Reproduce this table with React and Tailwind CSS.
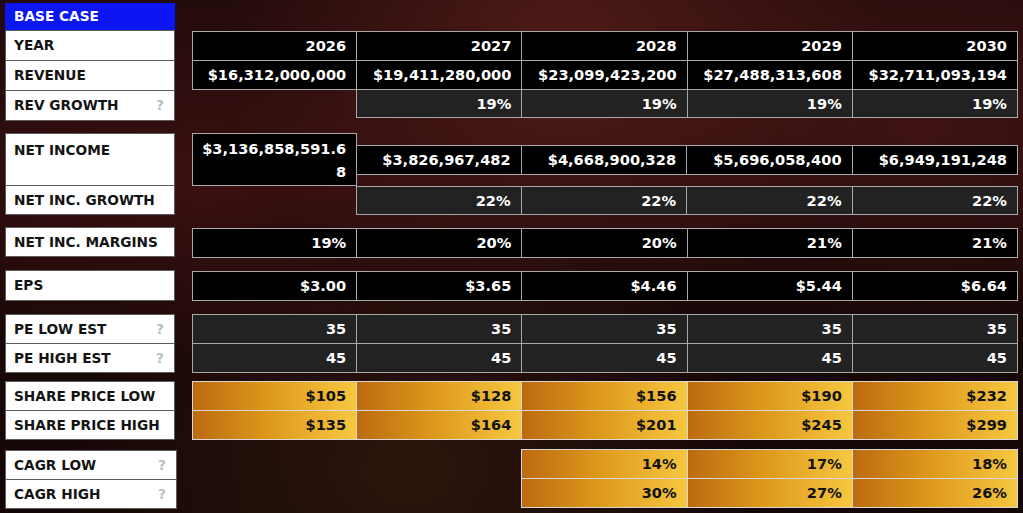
import React from 'react'

const years = ['2026', '2027', '2028', '2029', '2030']
const revenue = ['$16,312,000,000', '$19,411,280,000', '$23,099,423,200', '$27,488,313,608', '$32,711,093,194']
const revGrowth = ['19%', '19%', '19%', '19%']
const netIncome = ['$3,826,967,482', '$4,668,900,328', '$5,696,058,400', '$6,949,191,248']
const netGrowth = ['22%', '22%', '22%', '22%']
const margins = ['19%', '20%', '20%', '21%', '21%']
const eps = ['$3.00', '$3.65', '$4.46', '$5.44', '$6.64']
const peLow = ['35', '35', '35', '35', '35']
const peHigh = ['45', '45', '45', '45', '45']
const priceLow = ['$105', '$128', '$156', '$190', '$232']
const priceHigh = ['$135', '$164', '$201', '$245', '$299']
const cagrLow = ['14%', '17%', '18%']
const cagrHigh = ['30%', '27%', '26%']

const tones = {
  black: 'bg-black text-white border-[#a8a8a8]',
  gray: 'bg-[#222222] text-white border-[#a8a8a8]',
  gold: 'bg-linear-to-r from-[#bc6a10] via-[#e09c1c] to-[#f6c73f] text-[#111] border-[#d8d8d8]',
}

// one bordered value cell; -ml-px lets it overlap the neighbour's border
const Cell = ({ value, tone = 'black', first = false }) => (
  <div
    className={`${first ? '' : '-ml-px'} border flex items-center justify-end pr-[10px] ${tones[tone]}`}
  >
    {value}
  </div>
)

const DataRow = ({ values, tone, lead = 0, cols = 'grid-cols-5', h = 'h-[30px]', className = '' }) => (
  <div className={`grid ${cols} ${h} ${className}`}>
    {Array.from({ length: lead }).map((_, i) => (
      <div key={'g' + i} />
    ))}
    {values.map((v, i) => (
      <Cell key={i} value={v} tone={tone} first={i === 0 && lead === 0} />
    ))}
  </div>
)

const Label = ({ text, help, h = 'h-[30px]', top = false, first = false }) => (
  <div
    className={`${h} ${first ? '' : '-mt-px'} bg-white border border-[#5c5c5c] flex justify-between pl-[8px] pr-[10px] text-[#141414] ${
      top ? 'items-start pt-[6px]' : 'items-center'
    }`}
  >
    <span>{text}</span>
    {help && <span className="text-[#bdbdbd]">?</span>}
  </div>
)

export default function App() {
  return (
    <div className="w-[1023px] h-[513px] overflow-hidden bg-[#1a0808] bg-[radial-gradient(ellipse_at_55%_10%,#4f1b18_0%,transparent_42%),radial-gradient(ellipse_at_20%_35%,#3c1011_0%,transparent_38%),radial-gradient(ellipse_at_90%_25%,#401313_0%,transparent_35%),radial-gradient(ellipse_at_40%_92%,#2c150c_0%,transparent_40%),linear-gradient(180deg,#240b0b_0%,#140606_100%)] font-['DejaVu_Sans',sans-serif] font-bold text-[13.7px] pt-[3px] pl-[5px]">
      <div className="w-[170px] h-[27px] bg-[#0b16f2] text-white flex items-center pl-[9px]">BASE CASE</div>

      {/* year / revenue */}
      <div className="flex">
        <div className="w-[170px] flex flex-col">
          <Label text="YEAR" h="h-[31px]" first />
          <Label text="REVENUE" h="h-[31px]" />
          <Label text="REV GROWTH" help h="h-[31px]" />
        </div>
        <div className="ml-[17px] w-[826px] pt-px flex flex-col text-[14.6px]">
          <DataRow values={years} tone="black" />
          <DataRow values={revenue} tone="black" className="-mt-px" />
          <DataRow values={revGrowth} tone="gray" lead={1} h="h-[29px]" className="-mt-px" />
        </div>
      </div>

      {/* net income */}
      <div className="flex mt-[12px]">
        <div className="w-[170px] flex flex-col">
          <Label text="NET INCOME" h="h-[53px]" top first />
          <Label text="NET INC. GROWTH" />
        </div>
        <div className="ml-[17px] w-[826px] grid grid-cols-5 items-start text-[14.6px]">
          <div className="h-[53px] bg-black text-white border border-[#a8a8a8] flex flex-col items-end justify-center pr-[10px] leading-[23px]">
            <span>$3,136,858,591.6</span>
            <span>8</span>
          </div>
          <div className="col-span-4 -ml-px flex flex-col">
            <DataRow values={netIncome} tone="black" cols="grid-cols-4" className="mt-[12px]" />
            <DataRow values={netGrowth} tone="gray" cols="grid-cols-4" h="h-[29px]" className="mt-[11px]" />
          </div>
        </div>
      </div>

      {/* margins */}
      <div className="flex mt-[12px]">
        <div className="w-[170px] flex flex-col">
          <Label text="NET INC. MARGINS" first />
        </div>
        <div className="ml-[17px] w-[826px] pt-px flex flex-col text-[14.6px]">
          <DataRow values={margins} tone="black" />
        </div>
      </div>

      {/* eps */}
      <div className="flex mt-[12px]">
        <div className="w-[170px] flex flex-col">
          <Label text="EPS" h="h-[31px]" first />
        </div>
        <div className="ml-[17px] w-[826px] pt-px flex flex-col text-[14.6px]">
          <DataRow values={eps} tone="black" />
        </div>
      </div>

      {/* pe estimates */}
      <div className="flex mt-[13px]">
        <div className="w-[170px] flex flex-col">
          <Label text="PE LOW EST" help first />
          <Label text="PE HIGH EST" help />
        </div>
        <div className="ml-[17px] w-[826px] flex flex-col text-[14.6px]">
          <DataRow values={peLow} tone="gray" />
          <DataRow values={peHigh} tone="gray" className="-mt-px" />
        </div>
      </div>

      {/* share price */}
      <div className="flex mt-[8px]">
        <div className="w-[170px] flex flex-col">
          <Label text="SHARE PRICE LOW" first />
          <Label text="SHARE PRICE HIGH" />
        </div>
        <div className="ml-[17px] w-[826px] flex flex-col text-[14.6px]">
          <DataRow values={priceLow} tone="gold" />
          <DataRow values={priceHigh} tone="gold" className="-mt-px" />
        </div>
      </div>

      {/* cagr */}
      <div className="flex mt-[10px]">
        <div className="w-[172px] flex flex-col">
          <Label text="CAGR LOW" help first />
          <Label text="CAGR HIGH" help />
        </div>
        <div className="ml-[15px] w-[826px] -mt-px flex flex-col text-[14.6px]">
          <DataRow values={cagrLow} tone="gold" lead={2} />
          <DataRow values={cagrHigh} tone="gold" lead={2} className="-mt-px" />
        </div>
      </div>
    </div>
  )
}
